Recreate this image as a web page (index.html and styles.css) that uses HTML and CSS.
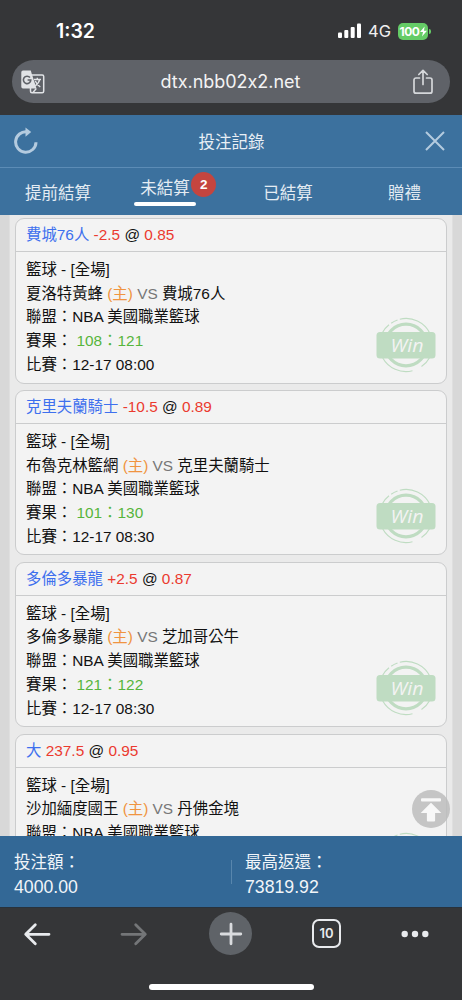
FILE: index.html
```html
<!DOCTYPE html>
<html lang="zh-Hant">
<head>
    <meta charset="UTF-8">
    <meta name="viewport" content="width=device-width, initial-scale=1.0">
    <title>投注記錄</title>
    <link rel="stylesheet" href="styles.css">
</head>
<body>

<div class="phone">
    <div class="status-bar">
        <span class="time">1:32</span>
        <div class="status-right">
            <svg width="24" height="16" viewBox="0 0 24 16" fill="#fff">
                <rect x="0" y="9.5" width="4" height="5.5" rx="1"/>
                <rect x="6.3" y="7" width="4" height="8" rx="1"/>
                <rect x="12.7" y="4" width="4" height="11" rx="1"/>
                <rect x="19" y="0.5" width="4" height="14.5" rx="1"/>
            </svg>
            <span class="network">4G</span>
            <span class="battery">100<svg width="7" height="11" viewBox="0 0 7 11"><path d="M4.6 0.5L0 6h3L2 10.5 7 4.8H4z" fill="#fff"/></svg></span>
            <i class="battery-tip"></i>
        </div>
    </div>

    <div class="url-bar">
        <svg class="translate" width="24" height="24" viewBox="0 0 24 24">
            <rect x="9.5" y="5" width="13.2" height="17.7" rx="1.5" fill="none" stroke="#e1e3e6" stroke-width="1.5"/>
            <path d="M2 0.5h7.8l1 3.5 4.7 14.5H2A1.7 1.7 0 0 1 .3 16.8V2.2A1.7 1.7 0 0 1 2 .5z" fill="#e1e3e6"/>
            <path d="M9 7.6A3.7 3.7 0 1 0 9.8 10H6.6" fill="none" stroke="#5f6268" stroke-width="1.6"/>
            <path d="M13 9.5h7M16.3 7.7v1.8M18.6 9.7c-.5 2.5-2.3 4.7-4.4 6.1M14.3 11c1 2.5 2.8 4.5 5 6" fill="none" stroke="#e1e3e6" stroke-width="1.4"/>
            <path d="M12 22.5l3.3-4" stroke="#e1e3e6" stroke-width="1.4"/>
        </svg>
        <span class="url">dtx.nbb02x2.net</span>
        <svg class="share" width="20" height="26" viewBox="0 0 20 26" fill="none" stroke="#d5d7da" stroke-width="1.7" stroke-linecap="round" stroke-linejoin="round">
            <path d="M6.5 9H3a2 2 0 0 0-2 2v11.2a2 2 0 0 0 2 2h14a2 2 0 0 0 2-2V11a2 2 0 0 0-2-2h-3.5M10 15.5V1.5M5.8 5.5L10 1.3l4.2 4.2"/>
        </svg>
    </div>

    <header>
        <svg width="24" height="28" viewBox="0 0 24 28">
            <path d="M13.2 4.9A10.2 10.2 0 1 0 22 15.2" fill="none" stroke="#b4cbdf" stroke-width="3"/>
            <path d="M11.5 0.5L17.2 5 11.5 9.7z" fill="#b4cbdf"/>
        </svg>
        <h1>投注記錄</h1>
        <svg width="20" height="20" viewBox="0 0 20 20" stroke="#b4cbdf" stroke-width="2">
            <path d="M1 1l18 18M19 1L1 19"/>
        </svg>
    </header>

    <nav>
        <div class="tab">提前結算</div>
        <div class="tab active"><span class="tab-label">未結算<span class="badge">2</span></span></div>
        <div class="tab">已結算</div>
        <div class="tab">贈禮</div>
    </nav>

    <main>
        <div class="list">
            <div class="card">
                <div class="card-title"><span class="team">費城76人</span> <span class="red">-2.5</span> @ <span class="red">0.85</span></div>
                <div class="card-body">
                    <p>籃球 - [全場]</p>
                    <p>夏洛特黃蜂 <span class="home">(主)</span> <span class="vs">VS</span> 費城76人</p>
                    <p>聯盟：NBA 美國職業籃球</p>
                    <p>賽果： <span class="score">108：121</span></p>
                    <p>比賽：12-17 08:00</p>
                </div>
                <svg class="stamp">
                    <g id="win">
                        <g fill="none" stroke="#bfdcc2">
                            <circle cx="30" cy="28" r="20.8" stroke-width="3.2"/>
                            <path d="M23.8 2.2A26.5 26.5 0 0 1 54 16.5M6.5 15.5A26.5 26.5 0 0 1 13 7.8M15.2 6.2A26.5 26.5 0 0 1 21.5 3M6.5 40.5A26.5 26.5 0 0 0 36.5 53.7M54 40A26.5 26.5 0 0 1 45.5 49.5" stroke-width="1.1"/>
                        </g>
                        <rect x="0.5" y="15" width="59" height="26.5" rx="3.5" fill="#bfdcc2"/>
                        <text x="14.5" y="34.7" class="win-text" textLength="33" lengthAdjust="spacingAndGlyphs">Win</text>
                    </g>
                </svg>
            </div>
            <div class="card">
                <div class="card-title"><span class="team">克里夫蘭騎士</span> <span class="red">-10.5</span> @ <span class="red">0.89</span></div>
                <div class="card-body">
                    <p>籃球 - [全場]</p>
                    <p>布魯克林籃網 <span class="home">(主)</span> <span class="vs">VS</span> 克里夫蘭騎士</p>
                    <p>聯盟：NBA 美國職業籃球</p>
                    <p>賽果： <span class="score">101：130</span></p>
                    <p>比賽：12-17 08:30</p>
                </div>
                <svg class="stamp"><use href="#win"/></svg>
            </div>
            <div class="card">
                <div class="card-title"><span class="team">多倫多暴龍</span> <span class="red">+2.5</span> @ <span class="red">0.87</span></div>
                <div class="card-body">
                    <p>籃球 - [全場]</p>
                    <p>多倫多暴龍 <span class="home">(主)</span> <span class="vs">VS</span> 芝加哥公牛</p>
                    <p>聯盟：NBA 美國職業籃球</p>
                    <p>賽果： <span class="score">121：122</span></p>
                    <p>比賽：12-17 08:30</p>
                </div>
                <svg class="stamp"><use href="#win"/></svg>
            </div>
            <div class="card">
                <div class="card-title"><span class="team">大</span> <span class="red">237.5</span> @ <span class="red">0.95</span></div>
                <div class="card-body">
                    <p>籃球 - [全場]</p>
                    <p>沙加緬度國王 <span class="home">(主)</span> <span class="vs">VS</span> 丹佛金塊</p>
                    <p>聯盟：NBA 美國職業籃球</p>
                </div>
                <svg class="stamp"><use href="#win"/></svg>
            </div>
        </div>
        <svg class="to-top" width="38" height="38" viewBox="0 0 38 38">
            <circle cx="19" cy="19" r="19" fill="#bcbcbc" fill-opacity="0.85"/>
            <rect x="9" y="8.2" width="20" height="3.3" rx="1" fill="#f8f8f8"/>
            <path d="M19 12.8l10.3 10.3h-6.2v7.5a1 1 0 0 1-1 1h-6.2a1 1 0 0 1-1-1v-7.5H8.7z" fill="#f8f8f8"/>
        </svg>
    </main>

    <footer>
        <div class="total">
            <span>投注額：</span>
            <strong>4000.00</strong>
        </div>
        <div class="total">
            <span>最高返還：</span>
            <strong>73819.92</strong>
        </div>
    </footer>

    <div class="toolbar">
        <div class="tools">
            <svg width="28" height="24" viewBox="0 0 28 24" fill="none" stroke="#e8eaed" stroke-width="2.8" stroke-linecap="round" stroke-linejoin="round">
                <path d="M26 12.3H3M12.3 2.8L2.7 12.3l9.6 9.4"/>
            </svg>
            <svg class="forward" width="28" height="24" viewBox="0 0 28 24" fill="none" stroke="#747678" stroke-width="2.8" stroke-linecap="round" stroke-linejoin="round">
                <path d="M2 12.3h23M15.7 2.8l9.6 9.5-9.6 9.4"/>
            </svg>
            <span class="new-tab">
                <svg width="24" height="24" viewBox="0 0 24 24" stroke="#d9dbde" stroke-width="2.8" stroke-linecap="round">
                    <path d="M12 2.2v19.6M2.2 12h19.6"/>
                </svg>
            </span>
            <span class="tab-count">10</span>
            <svg width="28" height="8" viewBox="0 0 28 8" fill="#e8eaed">
                <circle cx="3.7" cy="4" r="3.2"/>
                <circle cx="14" cy="4" r="3.2"/>
                <circle cx="24.3" cy="4" r="3.2"/>
            </svg>
        </div>
        <div class="home-bar"></div>
    </div>
</div>

</body>
</html>
```
FILE: styles.css
```css
* {
    box-sizing: border-box;
}

body {
    margin: 0;
    font-family: "Liberation Sans", "Noto Sans CJK TC", sans-serif;
    background-color: #353638;
}

svg {
    display: block;
    flex-shrink: 0;
}

.phone {
    width: 462px;
    height: 1000px;
    display: flex;
    flex-direction: column;
    overflow: hidden;
}

/* Barra de estado */
.status-bar {
    height: 60px;
    flex-shrink: 0;
    display: flex;
    justify-content: space-between;
    padding: 2px 31px 0 56px;
    align-items: center;
    color: #fff;
    font-family: Inter, sans-serif;
}

.time {
    font-size: 19.5px;
    font-weight: 600;
}

.status-right {
    display: flex;
    align-items: center;
}

.network {
    font-size: 16.5px;
    margin: 0 7px 0 6px;
    color: #f0f0f0;
}

.battery {
    display: flex;
    align-items: center;
    justify-content: center;
    width: 30px;
    height: 17px;
    border-radius: 5px;
    background-color: #65cc66;
    font-size: 12px;
    font-weight: 700;
    letter-spacing: -0.4px;
}

.battery-tip {
    width: 2px;
    height: 5px;
    margin-left: 1px;
    border-radius: 0 2px 2px 0;
    background-color: #65cc66;
}

.url-bar {
    height: 43px;
    flex-shrink: 0;
    margin: 0 12px;
    padding: 0 17px 0 9px;
    display: flex;
    align-items: center;
    justify-content: space-between;
    border-radius: 22px;
    background-color: #5f6268;
}

.url {
    margin-left: 3px;
    font-family: Inter, sans-serif;
    font-size: 18px;
    letter-spacing: -0.02px;
    font-feature-settings: "calt" 0;
    color: #f3f3f4;
}

/* Cabecera */
header {
    height: 53px;
    flex-shrink: 0;
    margin-top: 12px;
    padding: 0 17px 0 14px;
    display: flex;
    align-items: center;
    justify-content: space-between;
    background-color: #3c719e;
    border-bottom: 1px solid #5c8cb6;
}

h1 {
    margin: 0;
    font-size: 16.5px;
    font-weight: normal;
    color: #e8eff5;
}

nav {
    height: 47px;
    flex-shrink: 0;
    display: grid;
    grid-template-columns: 116px 113px 118px 115px;
    background-color: #3c719e;
    color: #e4ecf3;
    font-size: 16.5px;
}

.tab {
    display: flex;
    align-items: center;
    justify-content: center;
}

.tab.active {
    align-items: flex-start;
    padding-right: 15px;
    padding-top: 4px;
}

.tab-label {
    position: relative;
    height: 31px;
    line-height: 33px;
}

.tab-label::after {
    content: '';
    position: absolute;
    left: -6px;
    top: 30px;
    width: 62px;
    height: 4px;
    border-radius: 2px;
    background-color: #fff;
}

.badge {
    position: absolute;
    top: 0;
    left: 51px;
    width: 25px;
    height: 25px;
    border-radius: 50%;
    background-color: #c4453f;
    color: #fff;
    font-size: 13.5px;
    font-weight: bold;
    line-height: 26px;
    text-align: center;
}

/* Lista de apuestas */
main {
    position: relative;
    height: 621px;
    flex-shrink: 0;
    padding: 0 9px;
    background-color: #d8d8d8;
    overflow: hidden;
}

.list {
    height: 100%;
    padding: 3px 5px 0;
    background-color: #eaeaea;
    border-left: 1px solid #dfdfdf;
    border-right: 1px solid #dfdfdf;
    overflow: hidden;
}

.card {
    position: relative;
    height: 165.5px;
    margin-bottom: 6.4px;
    border: 1px solid #cbcccd;
    border-radius: 9px;
    background-color: #f3f3f3;
    font-size: 15.4px;
    color: #111;
}

.card-title {
    height: 33px;
    padding-left: 10px;
    line-height: 32px;
    border-bottom: 1px solid #cbcccd;
}

.card-body {
    padding: 6px 10px;
}

.card-body p {
    margin: 0;
    height: 23.7px;
    line-height: 23px;
    white-space: nowrap;
}

.team {
    color: #3e70ee;
}

.red {
    color: #eb3a2f;
}

.home {
    color: #f09440;
}

.vs {
    color: #777;
}

.score {
    color: #56b53c;
}

.stamp {
    position: absolute;
    right: 10px;
    bottom: 10px;
    width: 60px;
    height: 56px;
}

.win-text {
    font-family: "Open Sans", sans-serif;
    font-size: 18.5px;
    font-style: italic;
    font-weight: 500;
    fill: #f3f3f3;
}

.to-top {
    position: absolute;
    right: 12px;
    bottom: 8px;
}

/* Totales */
footer {
    height: 71px;
    flex-shrink: 0;
    display: flex;
    align-items: center;
    padding-top: 4px;
    background-color: #336896;
    color: #f1f5f9;
}

.total {
    flex: 1;
    padding-left: 14px;
}

.total + .total {
    position: relative;
}

.total + .total::before {
    content: '';
    position: absolute;
    left: 0;
    top: 10px;
    width: 1px;
    height: 24px;
    background-color: #5886ad;
}

.total span,
.total strong {
    display: block;
    height: 24px;
    line-height: 24px;
    font-size: 16.5px;
    font-weight: normal;
}

.total strong {
    font-size: 17.7px;
    line-height: 26px;
}

.toolbar {
    flex: 1;
    display: flex;
    flex-direction: column;
    align-items: center;
    border-top: 1px solid #28323c;
}

.tools {
    width: 100%;
    height: 51px;
    padding-left: 23px;
    display: flex;
    align-items: center;
    gap: 60px;
}

.forward {
    margin-left: 9px;
}

.new-tab {
    width: 43px;
    height: 43px;
    margin-left: 1px;
    border-radius: 50%;
    display: flex;
    align-items: center;
    justify-content: center;
    background-color: #5f6368;
}

.tab-count {
    width: 29px;
    height: 29px;
    border: 2px solid #e8eaed;
    border-radius: 7px;
    color: #e8eaed;
    font-family: Inter, sans-serif;
    font-size: 13px;
    font-weight: 600;
    line-height: 25px;
    text-align: center;
}

.home-bar {
    width: 165px;
    height: 6px;
    margin-top: 25px;
    border-radius: 3px;
    background-color: #fff;
}
```
